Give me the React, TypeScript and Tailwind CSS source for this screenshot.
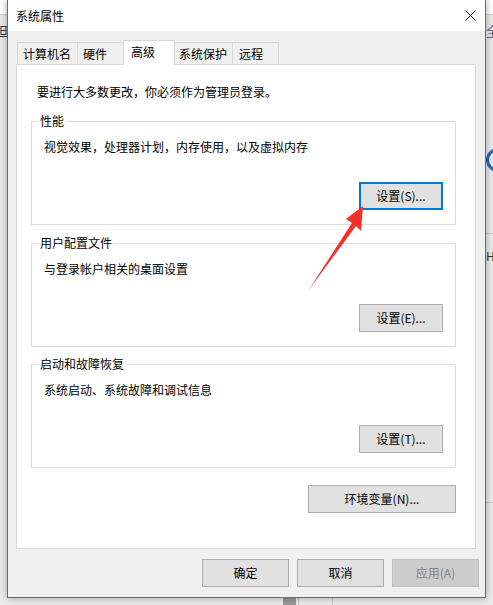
import type { ReactNode } from 'react';

const font = { fontFamily: '"Noto Sans CJK SC", "Noto Sans", sans-serif' };

function WinButton({ children, w, focused, disabled }: { children: ReactNode; w: string; focused?: boolean; disabled?: boolean }) {
  const base = 'flex h-[28px] items-center justify-center text-[12px] leading-none';
  if (disabled) {
    return <div className={`${base} ${w} border border-[#bfbfbf] bg-[#cccccc] text-[#838383]`}>{children}</div>;
  }
  if (focused) {
    return <div className={`${base} ${w} border-2 border-[#0078d7] bg-[#e1e1e1] text-black`}>{children}</div>;
  }
  return <div className={`${base} ${w} border border-[#adadad] bg-[#e1e1e1] text-black`}>{children}</div>;
}

function GroupBox({ title, text, button, focused, className }: { title: string; text: string; button: string; focused?: boolean; className: string }) {
  return (
    <fieldset className={`mx-[14px] mr-[19px] h-[112px] border border-[#dcdcdc] ${className}`}>
      <legend className="ml-[6px] px-[2px] text-[12px] leading-[16px]">{title}</legend>
      <div className="pl-[12px] pt-[10px] text-[12px] leading-[16px]">{text}</div>
      <div className="mt-[27px] flex justify-end pr-[12px]">
        <WinButton w="w-[84px]" focused={focused}>{button}</WinButton>
      </div>
    </fieldset>
  );
}

export default function App() {
  return (
    <div className="relative h-[605px] w-[493px] overflow-hidden bg-[#ececec] text-black" style={font}>
      {/* backdrop scraps */}
      <div className="h-[15px] border-b border-[#d4d4d4] bg-white" />
      <div className="absolute left-[-5px] top-[21px] whitespace-nowrap text-[13px] text-[#333]">担</div>
      <div className="absolute left-[486px] top-[21px] whitespace-nowrap text-[13px] text-[#5b6b80]">全部</div>
      <div className="absolute left-[486px] top-[148px] h-[24px] w-[24px] rounded-full border-[3px] border-[#1a6fc0]" />
      <div className="absolute left-[486px] top-[233px] h-px w-[10px] bg-[#c8c8c8]" />
      <div className="absolute left-[486px] top-[247px] whitespace-nowrap text-[12px] text-[#333]">Hz</div>
      <div className="absolute left-[486px] top-[502px] h-px w-[10px] bg-[#c8c8c8]" />
      <div className="absolute left-[283px] top-[598px] h-[7px] w-[13px] bg-[#9a9a9a]" />
      <div className="absolute left-[298px] top-[598px] h-[7px] w-px bg-[#c8c8c8]" />
      <div className="absolute left-[332px] top-[598px] h-[7px] w-px bg-[#c8c8c8]" />

      {/* dialog window */}
      <div className="absolute left-[7px] top-0 flex h-[598px] w-[479px] flex-col border-x border-b border-[#6b6b6b] shadow-[0_0_8px_rgba(0,0,0,0.35)]">
        <div className="flex h-[31px] items-center justify-between bg-white pl-[8px] pr-[9px]">
          <span className="text-[12px]">系统属性</span>
          <svg width="11" height="11" viewBox="0 0 11 11">
            <path d="M0.5 0.5 L10.5 10.5 M10.5 0.5 L0.5 10.5" stroke="#000" strokeWidth="1" />
          </svg>
        </div>

        <div className="flex flex-1 flex-col bg-[#f0f0f0] pt-[9px]">
          {/* tabs */}
          <div className="ml-[9px] flex h-[24px] items-end text-[12px]">
            <div className="flex h-[22px] w-[60px] items-center border-l border-t border-[#d9d9d9] pl-[5px]">计算机名</div>
            <div className="flex h-[22px] w-[46px] items-center border-l border-t border-[#d9d9d9] pl-[5px]">硬件</div>
            <div className="relative z-10 -mb-px flex h-[25px] w-[52px] items-start border-x border-t border-[#d9d9d9] bg-white pl-[7px] pt-[2px]">高级</div>
            <div className="flex h-[22px] w-[57px] items-center border-t border-[#d9d9d9] pl-[4px]">系统保护</div>
            <div className="flex h-[22px] w-[47px] items-center border-x border-t border-[#d9d9d9] pl-[6px]">远程</div>
          </div>

          {/* panel */}
          <div className="ml-[8px] flex h-[485px] w-[460px] flex-col border border-[#d9d9d9] bg-white">
            <p className="pl-[20px] pt-[19px] text-[12px] leading-[16px]">要进行大多数更改，你必须作为管理员登录。</p>
            <GroupBox className="mt-[13px]" title="性能" text="视觉效果，处理器计划，内存使用，以及虚拟内存" button="设置(S)..." focused />
            <GroupBox className="mt-[10px]" title="用户配置文件" text="与登录帐户相关的桌面设置" button="设置(E)..." />
            <GroupBox className="mt-[9px]" title="启动和故障恢复" text="系统启动、系统故障和调试信息" button="设置(T)..." />
            <div className="mt-[17px] flex justify-end pr-[19px]">
              <WinButton w="w-[148px]">环境变量(N)...</WinButton>
            </div>
          </div>

          {/* dialog buttons */}
          <div className="mt-[10px] flex justify-end gap-[8px] pr-[6px]">
            <WinButton w="w-[87px]">确定</WinButton>
            <WinButton w="w-[87px]">取消</WinButton>
            <WinButton w="w-[87px]" disabled>应用(A)</WinButton>
          </div>
        </div>
      </div>

      {/* red annotation arrow */}
      <svg className="pointer-events-none absolute left-0 top-0" width="493" height="605" viewBox="0 0 493 605">
        <polygon points="363,206 361,231 356,226 308,291 352,223 346,219" fill="#f5302b" />
      </svg>
    </div>
  );
}
